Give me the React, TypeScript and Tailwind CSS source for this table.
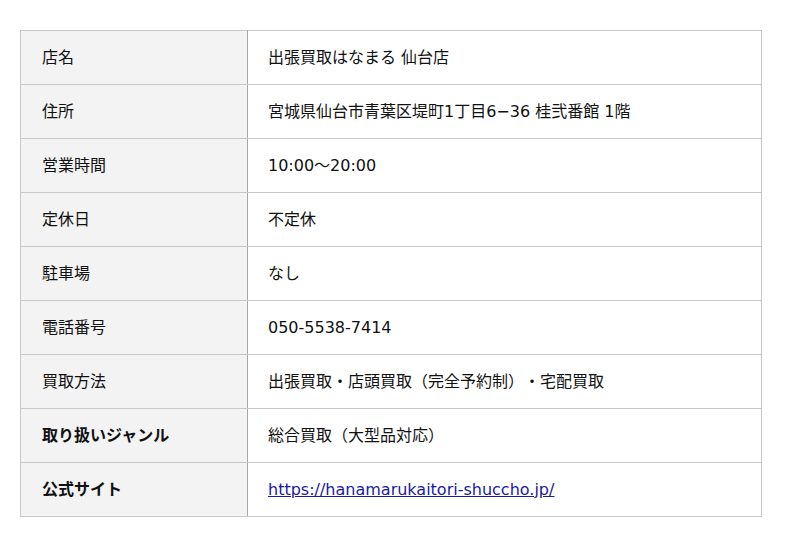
const rows: { label: string; value: string; bold?: boolean; link?: boolean }[] = [
  { label: "店名", value: "出張買取はなまる 仙台店" },
  { label: "住所", value: "宮城県仙台市青葉区堤町1丁目6−36 桂弐番館 1階" },
  { label: "営業時間", value: "10:00～20:00" },
  { label: "定休日", value: "不定休" },
  { label: "駐車場", value: "なし" },
  { label: "電話番号", value: "050-5538-7414" },
  { label: "買取方法", value: "出張買取・店頭買取（完全予約制）・宅配買取" },
  { label: "取り扱いジャンル", value: "総合買取（大型品対応）", bold: true },
  { label: "公式サイト", value: "https://hanamarukaitori-shuccho.jp/", bold: true, link: true },
];

export default function App() {
  return (
    <div className="min-h-[547px] bg-white pt-[30px] pl-5 font-['DejaVu_Sans','Noto_Sans_CJK_JP',sans-serif] text-[16px] text-[#111] [text-spacing-trim:space-all]">
      <table className="w-[742px] border-collapse border border-[#d4d4d4]">
        <tbody>
          {rows.map((r) => (
            <tr key={r.label} className="h-[54px]">
              <th
                className={`w-[227px] border border-[#c8c8c8] border-r-[#a8a8a8] bg-[#f3f3f3] px-[21px] text-left align-middle ${
                  r.bold ? "font-bold" : "font-normal"
                }`}
              >
                {r.label}
              </th>
              <td className="border border-[#c8c8c8] border-l-[#a8a8a8] px-5 align-middle">
                {r.link ? (
                  <a href={r.value} className="text-[#1a1aa6] underline">
                    {r.value}
                  </a>
                ) : (
                  r.value
                )}
              </td>
            </tr>
          ))}
        </tbody>
      </table>
    </div>
  );
}
